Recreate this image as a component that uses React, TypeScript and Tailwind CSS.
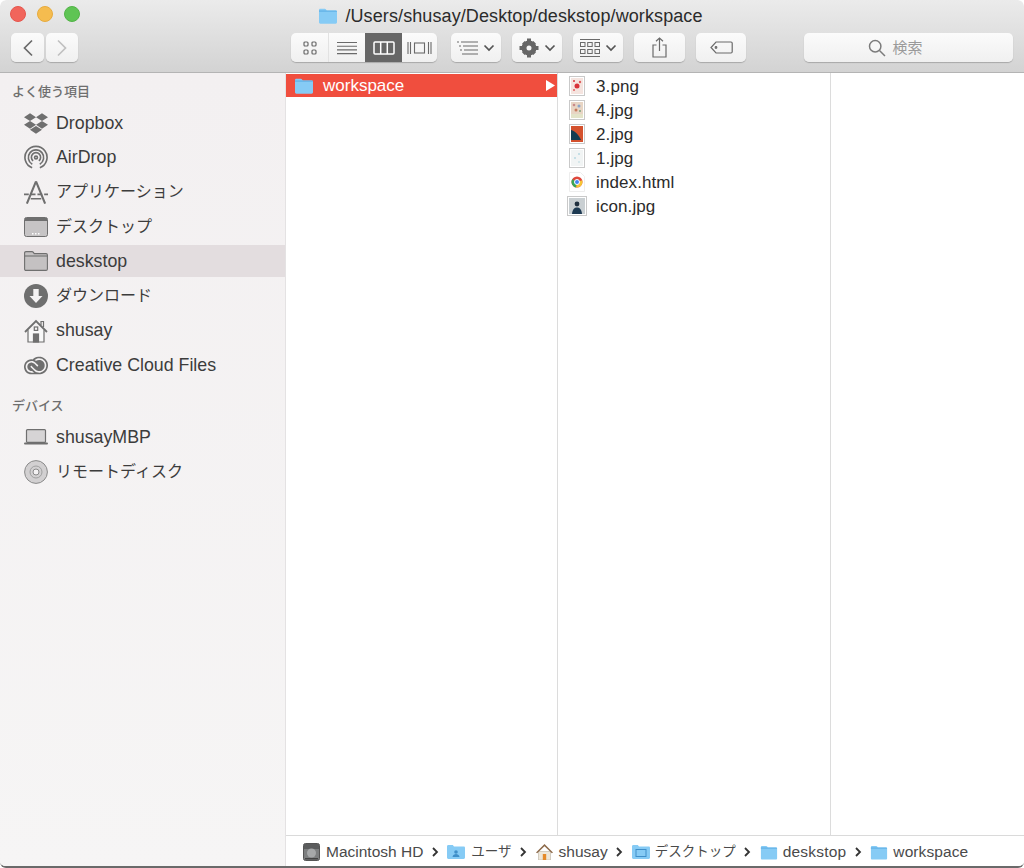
import { ReactNode } from "react";
import { FaDropbox } from "react-icons/fa";
import { SiAdobecreativecloud } from "react-icons/si";

const FONT = "font-['Liberation_Sans','Noto_Sans_CJK_JP',sans-serif]";

function Folder({ w = 20, h = 16 }: { w?: number; h?: number }) {
  return (
    <svg width={w} height={h} viewBox="0 0 20 16">
      <path d="M1 2.2C1 1.3 1.6.8 2.4.8h4.4c.7 0 1 .3 1.4.9l.6.8h8.8c.9 0 1.4.6 1.4 1.4v10.4c0 .9-.5 1.4-1.4 1.4H2.4C1.5 15.7 1 15.200 1 14.300z" fill="#86cbf5" />
      <path d="M1 4h18v-.1c0-.9-.5-1.400-1.400-1.400H8.800l-1-.2H1z" fill="#6bb8ea" />
    </svg>
  );
}

function ToolButton({ children, w, className = "" }: { children: ReactNode; w: string; className?: string }) {
  return (
    <div className={`${w} ${className} h-[29px] rounded-[5px] bg-gradient-to-b from-[#fbfbfb] to-[#f0f0f0] shadow-[0_1px_1px_rgba(0,0,0,0.22)] flex items-center justify-center gap-[5px]`}>
      {children}
    </div>
  );
}

function Caret() {
  return (
    <svg width="12" height="8" viewBox="0 0 12 8" fill="none" stroke="#555" strokeWidth="1.7">
      <path d="M1.500 1.500 6 6l4.500-4.500" />
    </svg>
  );
}

function Toolbar() {
  return (
    <div className="h-[73px] shrink-0 border-b border-[#b4b4b4] bg-gradient-to-b from-[#ebebeb] to-[#d3d3d3] rounded-t-[6px] flex flex-col">
      {/* title */}
      <div className="h-[33px] shrink-0 relative flex items-center justify-center pr-[3px]">
        <div className="absolute left-[10px] top-[6px] flex gap-[11px]">
          <span className="w-4 h-4 rounded-full bg-[#f1655c] border border-[#e5564d]" />
          <span className="w-4 h-4 rounded-full bg-[#f5bc4f] border border-[#e6ab3f]" />
          <span className="w-4 h-4 rounded-full bg-[#5fc454] border border-[#52b347]" />
        </div>
        <div className="flex items-center gap-[7px] -mt-[2px]">
          <Folder />
          <span className="text-[18px] tracking-[0.1px] leading-5 text-[#2b2b2b]">/Users/shusay/Desktop/deskstop/workspace</span>
        </div>
      </div>
      {/* buttons */}
      <div className="flex px-[11px] items-start">
        <div className="flex gap-[2px]">
          <ToolButton w="w-[33px]">
            <svg width="12" height="18" viewBox="0 0 12 18" fill="none" stroke="#6a6a6a" strokeWidth="1.700">
              <path d="M10 1.500 2.500 9l7.500 7.500" />
            </svg>
          </ToolButton>
          <ToolButton w="w-[32px]">
            <svg width="12" height="18" viewBox="0 0 12 18" fill="none" stroke="#c0c0c0" strokeWidth="1.700">
              <path d="M2 1.500 9.500 9 2 16.500" />
            </svg>
          </ToolButton>
        </div>
        <div className="ml-[213px] flex h-[29px] rounded-[5px] bg-gradient-to-b from-[#fbfbfb] to-[#f0f0f0] shadow-[0_1px_1px_rgba(0,0,0,0.22)]">
          <div className="w-[38px] flex items-center justify-center border-r border-[#e2e2e2]">
            <svg width="14" height="14" viewBox="0 0 14 14" fill="none" stroke="#6a6a6a" strokeWidth="1.200">
              <rect x="1" y="1" width="4" height="4" rx="1" />
              <rect x="9" y="1" width="4" height="4" rx="1" />
              <rect x="1" y="9" width="4" height="4" rx="1" />
              <rect x="9" y="9" width="4" height="4" rx="1" />
            </svg>
          </div>
          <div className="w-[36px] flex items-center justify-center">
            <svg width="20" height="14" viewBox="0 0 20 14" stroke="#6a6a6a" strokeWidth="1.100">
              <path d="M0 1.500h20M0 5.200h20M0 8.900h20M0 12.600h20" />
            </svg>
          </div>
          <div className="w-[37px] flex items-center justify-center bg-[#666666]">
            <svg width="22" height="14" viewBox="0 0 22 14" fill="none" stroke="#fff" strokeWidth="1.500">
              <rect x="1" y="1" width="20" height="12" rx="1" />
              <path d="M7.700 1v12M14.300 1v12" />
            </svg>
          </div>
          <div className="w-[35px] flex items-center justify-center">
            <svg width="25" height="14" viewBox="0 0 25 14" fill="none" stroke="#6a6a6a" strokeWidth="1.100">
              <rect x="7.500" y="2" width="10" height="10" />
              <path d="M1 1v12M3.500 1v12M21.500 1v12M24 1v12" />
            </svg>
          </div>
        </div>
        <ToolButton w="w-[50px]" className="ml-[14px]">
          <svg width="21" height="14" viewBox="0 0 21 14" stroke="#6a6a6a" strokeWidth="1.100">
            <path d="M0 1h2M4 1h17M2 5h2M6 5h15M3 9h2M7 9h14M5 13h16" />
          </svg>
          <Caret />
        </ToolButton>
        <ToolButton w="w-[50px]" className="ml-[11px]">
          <svg width="20" height="20" viewBox="0 0 20 20">
            <circle cx="10" cy="10" r="5" fill="none" stroke="#666" strokeWidth="5" />
            <path d="M8 .5h4v4H8zM8 15.500h4v4H8zM.5 8h4v4h-4zM15.500 8h4v4h-4z" fill="#666" />
            <path d="m3 5.700 2.700-2.700 2.400 2.400-2.700 2.700zM11.900 14.600l2.700-2.700 2.400 2.400-2.700 2.700zM14.300 3 17 5.700l-2.400 2.400-2.700-2.700zM5.400 11.900l2.700 2.700-2.400 2.400L3 14.300z" fill="#666" />
          </svg>
          <Caret />
        </ToolButton>
        <ToolButton w="w-[50px]" className="ml-[11px]">
          <svg width="20" height="18" viewBox="0 0 20 18" fill="none" stroke="#6a6a6a" strokeWidth="1">
            <path d="M0 .5h20M0 17.500h20" />
            <rect x=".5" y="3.500" width="4.500" height="4" />
            <rect x="7.700" y="3.500" width="4.500" height="4" />
            <rect x="15" y="3.500" width="4.500" height="4" />
            <rect x=".5" y="10.500" width="4.500" height="4" />
            <rect x="7.700" y="10.500" width="4.500" height="4" />
            <rect x="15" y="10.500" width="4.500" height="4" />
          </svg>
          <Caret />
        </ToolButton>
        <ToolButton w="w-[51px]" className="ml-[11px]">
          <svg width="15" height="21" viewBox="0 0 15 21" fill="none" stroke="#6a6a6a" strokeWidth="1.200">
            <path d="M4.500 8H1v12h13V8h-3.500M7.500 14V1M4 4.300 7.500 1 11 4.300" />
          </svg>
        </ToolButton>
        <ToolButton w="w-[50px]" className="ml-[11px]">
          <svg width="23" height="13" viewBox="0 0 23 13" fill="none" stroke="#6a6a6a" strokeWidth="1.200">
            <path d="M6 1h15a1.200 1.200 0 0 1 1.200 1.200v8.600A1.200 1.200 0 0 1 21 12H6L1 6.500z" />
            <circle cx="6" cy="6.500" r=".8" />
          </svg>
        </ToolButton>
        <ToolButton w="w-[209px]" className="ml-[58px] pr-[26px]">
          <svg width="18" height="18" viewBox="0 0 18 18" fill="none" stroke="#7b7b7b" strokeWidth="1.500">
            <circle cx="7.200" cy="7.200" r="5.700" />
            <path d="m11.500 11.500 5.500 5.500" />
          </svg>
          <span className="ml-[1px] pt-[2px] text-[15px] text-[#9a9a9a]">検索</span>
        </ToolButton>
      </div>
    </div>
  );
}

function SidebarRow({ icon, label, selected, cjk }: { icon: ReactNode; label: string; selected?: boolean; cjk?: boolean }) {
  return (
    <div className={`h-8 flex items-center pl-[24px] ${selected ? "bg-[#e3dddf]" : ""}`}>
      <div className="w-6 h-6 flex items-center justify-center shrink-0">{icon}</div>
      <span className={`ml-2 text-[#3c3c3c] ${cjk ? "text-[16px]" : "text-[17.8px]"}`}>{label}</span>
    </div>
  );
}

const G = "#6f6f6f";

function Sidebar() {
  return (
    <div className="w-[286px] shrink-0 bg-gradient-to-b from-[#f3f0f1] to-[#f6f5f5] border-r border-[#e4e2e3] pt-[11px] flex flex-col">
      <div className="pl-3 h-4 flex items-center text-[13px] font-medium text-[#6e6e6e]">よく使う項目</div>
      <div className="mt-[7px] flex flex-col gap-[2.6px]">
        <SidebarRow label="Dropbox" icon={<FaDropbox size={25} color={G} />} />
        <SidebarRow
          label="AirDrop"
          icon={
            <svg width="25" height="25" viewBox="0 0 25 25" fill="none" stroke={G} strokeWidth="1.700">
              <path d="M8.500 23.200a11.500 11.500 0 1 1 8 0" />
              <path d="M8.600 19.500a8 8 0 1 1 7.800 0" />
              <path d="M9.500 16a4.800 4.800 0 1 1 6 0" />
              <circle cx="12.500" cy="12.500" r="1.500" />
            </svg>
          }
        />
        <SidebarRow
          cjk
          label="アプリケーション"
          icon={
            <svg width="25" height="25" viewBox="0 0 25 25" fill="none" stroke={G} strokeWidth="2.200">
              <path d="M12.500 1 3 24M12.500 1l9.500 23" />
              <path d="M0 14.500h25" strokeWidth="1.800" strokeDasharray="5 2" />
              <path d="M7 19h11" strokeWidth="1.400" />
            </svg>
          }
        />
        <SidebarRow
          cjk
          label="デスクトップ"
          icon={
            <svg width="24" height="20" viewBox="0 0 24 20">
              <rect x=".5" y=".5" width="23" height="19" rx="2" fill="#c6c4c5" stroke={G} />
              <rect x="1" y="1" width="22" height="3" fill={G} />
              <path d="M8 16h1.500v1.500H8zM11 16h1.500v1.500H11zM14 16h1.500v1.500H14z" fill="#fff" />
            </svg>
          }
        />
        <SidebarRow
          selected
          label="deskstop"
          icon={
            <svg width="24" height="20" viewBox="0 0 24 20" stroke={G} strokeWidth="1.100">
              <path d="M.6 2c0-.8.500-1.400 1.400-1.400h6c.7 0 1 .3 1.400.8l.8 1.200H22c.9 0 1.400.5 1.400 1.400V18c0 .9-.5 1.400-1.400 1.400H2c-.9 0-1.400-.5-1.400-1.400z" fill="#c4c1c2" />
              <path d="M.6 5h22.800" fill="none" />
            </svg>
          }
        />
        <SidebarRow
          cjk
          label="ダウンロード"
          icon={
            <svg width="24" height="24" viewBox="0 0 24 24">
              <circle cx="12" cy="12" r="12" fill={G} />
              <path d="M9.300 5h5.400v7h3.800L12 19l-6.500-7h3.800z" fill="#f4f2f3" />
            </svg>
          }
        />
        <SidebarRow
          label="shusay"
          icon={
            <svg width="24" height="24" viewBox="0 0 24 24" fill="none" stroke={G} strokeWidth="1.200">
              <path d="M1 13 12 2l11 11" strokeWidth="1.800" />
              <path d="M4 11v12h16V11" fill="#f8f8f8" />
              <path d="M17 6V2.500h2.500V8" />
              <rect x="10.300" y="8" width="3.400" height="3.400" />
              <rect x="9.500" y="15" width="5" height="8" fill={G} />
            </svg>
          }
        />
        <SidebarRow label="Creative Cloud Files" icon={<SiAdobecreativecloud size={25} color={G} />} />
      </div>
      <div className="mt-[17px] pl-3 h-4 flex items-center text-[13px] font-medium text-[#6e6e6e]">デバイス</div>
      <div className="mt-[7px] flex flex-col gap-[2.6px]">
        <SidebarRow
          label="shusayMBP"
          icon={
            <svg width="24" height="16" viewBox="0 0 24 16">
              <rect x="2.500" y=".6" width="19" height="12.800" rx="1" fill="#d6d4d5" stroke={G} strokeWidth="1.200" />
              <rect x="0" y="13.500" width="24" height="2" rx="1" fill={G} />
            </svg>
          }
        />
        <SidebarRow
          cjk
          label="リモートディスク"
          icon={
            <svg width="24" height="24" viewBox="0 0 24 24" fill="none">
              <circle cx="12" cy="12" r="11.400" fill="#d2d0d1" stroke="#8a8a8a" strokeWidth="1" />
              <circle cx="12" cy="12" r="6" stroke="#a0a0a0" strokeWidth="1" />
              <circle cx="12" cy="12" r="3" fill="#f4f2f3" stroke="#8a8a8a" strokeWidth="1" />
            </svg>
          }
        />
      </div>
    </div>
  );
}

function Doc({ children, big }: { children: ReactNode; big?: boolean }) {
  return (
    <svg width={big ? 20 : 16} height="20" viewBox={big ? "0 0 20 20" : "0 0 16 20"} className="block">
      <rect x=".5" y=".5" width={big ? 19 : 15} height="19" fill="#fff" stroke="#c9c9c9" />
      {children}
    </svg>
  );
}

const FILES: { name: string; icon: ReactNode }[] = [
  {
    name: "3.png",
    icon: (
      <Doc>
        <rect x="2" y="2" width="12" height="16" fill="#f5e4df" />
        <circle cx="8" cy="10" r="2.500" fill="#d8333a" />
        <circle cx="5" cy="5" r="1" fill="#d8333a" />
        <circle cx="11" cy="6" r="1.200" fill="#e06060" />
        <circle cx="5" cy="14" r="1" fill="#e06060" />
      </Doc>
    ),
  },
  {
    name: "4.jpg",
    icon: (
      <Doc>
        <rect x="2" y="2" width="12" height="16" fill="#e8d5c4" />
        <circle cx="5" cy="5" r="1.300" fill="#c98a8a" />
        <circle cx="10" cy="6" r="1.500" fill="#8aa4c9" />
        <circle cx="7" cy="10" r="1.500" fill="#c77a5c" />
        <circle cx="11" cy="11" r="1" fill="#7fa37f" />
        <rect x="2" y="14" width="12" height="4" fill="#e3e3c8" />
      </Doc>
    ),
  },
  {
    name: "2.jpg",
    icon: (
      <Doc>
        <rect x="2" y="2" width="12" height="16" fill="#d4512d" />
        <path d="M2 6c4 1 8 5 10 10l-10 0z" fill="#123c52" />
      </Doc>
    ),
  },
  {
    name: "1.jpg",
    icon: (
      <Doc>
        <rect x="2" y="2" width="12" height="16" fill="#f1f4f4" />
        <circle cx="10" cy="6" r=".8" fill="#8fc7d6" />
        <circle cx="6" cy="10" r=".8" fill="#8fc7d6" />
        <circle cx="10" cy="14" r=".8" fill="#b5d5dc" />
      </Doc>
    ),
  },
  {
    name: "index.html",
    icon: (
      <svg width="16" height="20" viewBox="0 0 16 20" className="block">
        <path d="M.5.500h11l4 4v15H.5z" fill="#fff" stroke="#ededed" />
        <circle cx="8" cy="10" r="5.500" fill="#e0483c" />
        <path d="M8 10 3.200 7.300a5.500 5.500 0 0 0 4 8.100z" fill="#3aa757" />
        <path d="M8 10l5.200-1.700a5.500 5.500 0 0 1-6 7.100z" fill="#f6c534" />
        <circle cx="8" cy="10" r="2.500" fill="#4285f4" stroke="#fff" />
      </svg>
    ),
  },
  {
    name: "icon.jpg",
    icon: (
      <Doc big>
        <rect x="2" y="2" width="16" height="16" fill="#c9cfd2" />
        <circle cx="10" cy="8" r="2.400" fill="#20303f" />
        <path d="M5 18c.5-5 2.500-6.500 5-6.500s4.500 1.500 5 6.500z" fill="#1d3a52" />
      </Doc>
    ),
  },
];

function Columns() {
  return (
    <div className="flex-1 min-h-0 flex bg-white">
      <div className="w-[272px] shrink-0 border-r border-[#dcdcdc] pt-px">
        <div className="h-[23px] bg-[#f04e3e] flex items-center pl-[8px] pr-[2px]">
          <Folder />
          <span className="ml-[9px] pt-px text-[17px] text-white">workspace</span>
          <svg width="9" height="11" viewBox="0 0 9 11" className="ml-auto">
            <path d="M0 0l9 5.500L0 11z" fill="#fff" />
          </svg>
        </div>
      </div>
      <div className="w-[273px] shrink-0 border-r border-[#dcdcdc] pt-px flex flex-col">
        {FILES.map((f) => (
          <div key={f.name} className="h-6 shrink-0 flex items-center pl-[9px]">
            <div className="w-5 flex justify-center shrink-0">{f.icon}</div>
            <span className="ml-[9px] pt-px text-[17px] tracking-[0.1px] text-[#2b2b2b]">{f.name}</span>
          </div>
        ))}
      </div>
      <div className="flex-1" />
    </div>
  );
}

function Sep() {
  return (
    <svg width="7" height="10" viewBox="0 0 7 10" fill="none" stroke="#333" strokeWidth="1.800" className="mx-[8.5px] shrink-0">
      <path d="m1 1 4 4-4 4" />
    </svg>
  );
}

function PathBar() {
  return (
    <div className="h-[31px] shrink-0 border-t border-[#dadada] bg-white flex items-center pl-[17px] pt-[2px] text-[#4a4a4a] text-[15.500px]">
      <svg width="17" height="18" viewBox="0 0 17 18" className="mr-[6px]">
        <rect x=".5" y=".5" width="16" height="17" rx="2" fill="#7d7f80" stroke="#555" />
        <rect x="1" y="1" width="15" height="5" fill="#5b5c5d" />
        <circle cx="8.500" cy="10" r="4.500" fill="#a7a9aa" />
        <rect x="2" y="15" width="13" height="1.500" fill="#444" />
      </svg>
      <span>Macintosh HD</span>
      <Sep />
      <svg width="18" height="14" viewBox="0 0 18 14" className="mr-[6px]">
        <path d="M0 1.500C0 .6.500 0 1.400 0h4.400L7 1.500h9.600c.9 0 1.400.5 1.400 1.400v9.700c0 .9-.5 1.400-1.400 1.400H1.400C.5 14 0 13.500 0 12.600z" fill="#86cbf5" />
        <circle cx="9" cy="7" r="1.800" fill="#3f8fc9" />
        <path d="M5.500 12c.4-2.200 2-3 3.500-3s3.100.8 3.500 3z" fill="#3f8fc9" />
      </svg>
      <span className="text-[13.500px]">ユーザ</span>
      <Sep />
      <svg width="17" height="16" viewBox="0 0 17 16" className="mr-[6px]">
        <path d="M2.500 7.500h12V16h-12z" fill="#eee7da" stroke="#bcb3a3" strokeWidth=".6" />
        <path d="M0 8.500 8.500 0 17 8.500l-1.200.8-7.300-7-7.300 7z" fill="#8d6a4a" />
        <rect x="6.800" y="10" width="3.400" height="6" fill="#e58a2b" />
      </svg>
      <span>shusay</span>
      <Sep />
      <svg width="18" height="14" viewBox="0 0 18 14" className="mr-[5px]">
        <path d="M0 1.500C0 .6.500 0 1.400 0h4.400L7 1.500h9.600c.9 0 1.400.5 1.400 1.400v9.700c0 .9-.5 1.400-1.400 1.400H1.400C.5 14 0 13.500 0 12.600z" fill="#86cbf5" />
        <rect x="4" y="4.500" width="10" height="7" fill="none" stroke="#3f8fc9" />
      </svg>
      <span className="text-[13.500px]">デスクトップ</span>
      <Sep />
      <Folder w={18} h={15} />
      <span className="ml-[5px] tracking-[0.2px]">deskstop</span>
      <Sep />
      <Folder w={18} h={15} />
      <span className="ml-[5px] tracking-[0.1px]">workspace</span>
    </div>
  );
}

export default function App() {
  return (
    <div className={`${FONT} w-[1024px] h-[868px] overflow-hidden bg-white`}>
      <div className="h-[868px] flex flex-col overflow-hidden rounded-[6px] border-b-2 border-[#6a6a6a]">
        <Toolbar />
        <div className="flex-1 min-h-0 flex">
          <Sidebar />
          <div className="flex-1 min-w-0 flex flex-col">
            <Columns />
            <PathBar />
          </div>
        </div>
      </div>
    </div>
  );
}
